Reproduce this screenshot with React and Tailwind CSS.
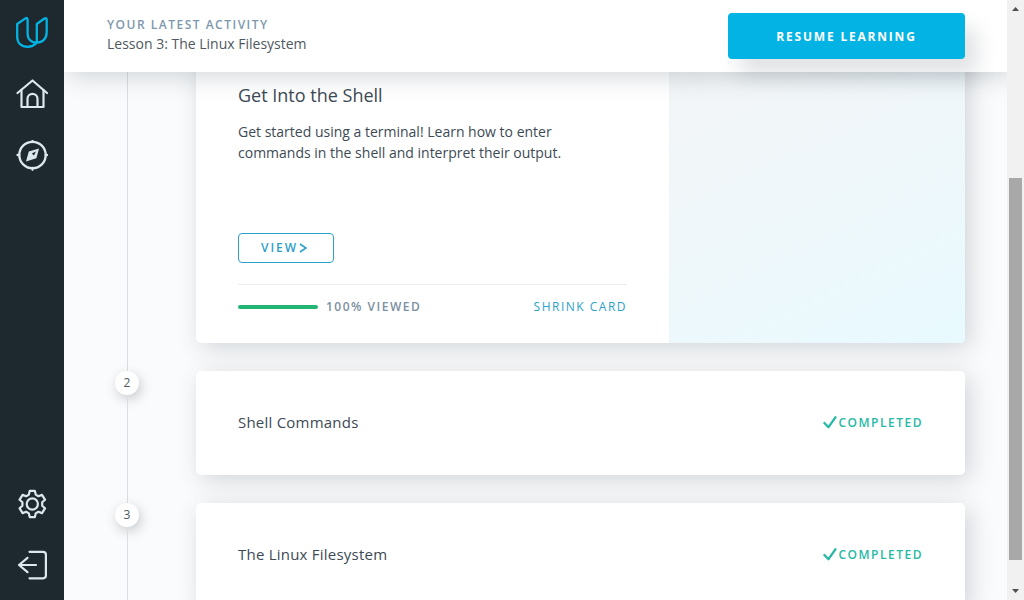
import React from "react";

function Logo() {
  return (
    <svg viewBox="0 0 32 32" className="size-8" fill="none" stroke="#02b3e4" strokeWidth="2.3" strokeLinejoin="round" strokeLinecap="round" aria-hidden="true">
      <path d="M1.2 8 9.4 2.400Q11.6 1.200 11.6 3.800V17.500C11.6 23.500 15.500 26.600 20.800 26.600C17.800 29.600 15.200 30.800 11.600 30.800C5.400 30.800 1.200 27 1.200 20.800Z" />
      <path d="M20.800 26.600V8L28.400 2.500Q30.700 1.200 30.700 3.800V16C30.700 22.600 26.600 26.600 20.800 26.600Z" />
    </svg>
  );
}

function HomeIcon() {
  return (
    <svg viewBox="0 0 32 32" className="size-8" fill="none" stroke="#dbe8ee" strokeWidth="2.2" strokeLinejoin="round" strokeLinecap="round" aria-hidden="true">
      <path d="M1.500 15 16.500 2.500 31 15" />
      <path d="M5.500 12V29H27.500V12" />
      <path d="M11.500 29V20.800A5 5 0 0 1 21.500 20.800V29" />
    </svg>
  );
}

function CompassIcon() {
  return (
    <svg viewBox="0 1 32 32" className="size-8" fill="none" stroke="#dbe8ee" strokeWidth="2.3" strokeLinecap="round" aria-hidden="true">
      <circle cx="16.500" cy="16" r="13.200" />
      <path d="M16.500 2V3M16.500 29V30.800M1.500 16H3.300M29.700 16H31" />
      <path fillRule="evenodd" fill="#dbe8ee" stroke="none" d="M23 9.400 20.400 19.200 10 22.600 12.800 12.600ZM15.800 14.500 18 16.600 19.900 12.500Z" />
    </svg>
  );
}

function GearIcon() {
  return (
    <svg viewBox="0 0 32 32" className="size-8" fill="none" stroke="#dbe8ee" strokeWidth="2.2" strokeLinejoin="round" aria-hidden="true">
      <circle cx="16.300" cy="16" r="5.600" />
      <path d="M13.700 2.900H18.900L19.700 6.600L22.400 8.200L26 6.900L29 11.700L26.200 14.200V17.800L29 20.300L26 25.100L22.400 23.800L19.700 25.400L18.900 29.100H13.700L12.900 25.400L10.200 23.800L6.600 25.100L3.600 20.300L6.400 17.800V14.200L3.600 11.700L6.600 6.900L10.200 8.200L12.900 6.600Z" />
    </svg>
  );
}

function LogoutIcon() {
  return (
    <svg viewBox="0 0 32 32" className="size-8" fill="none" stroke="#dbe8ee" strokeWidth="2.2" strokeLinejoin="round" strokeLinecap="round" aria-hidden="true">
      <path d="M13.500 2.800H27Q29.900 2.800 29.900 5.600V26.600Q29.900 29.300 27 29.300H13.500" />
      <path d="M20 16H3M11.500 8.800 3 16 11.500 23.200" />
    </svg>
  );
}

function Sidebar() {
  return (
    <nav aria-label="Main" className="flex w-16 shrink-0 flex-col items-center justify-between bg-[#1e282f] pt-4 pb-[19px]">
      <div className="flex flex-col items-center gap-[30px]">
        <a href="#" aria-label="Dashboard"><Logo /></a>
        <a href="#" aria-label="Home"><HomeIcon /></a>
        <a href="#" aria-label="Explore"><CompassIcon /></a>
      </div>
      <div className="flex flex-col items-center gap-[29px]">
        <a href="#" aria-label="Settings"><GearIcon /></a>
        <a href="#" aria-label="Log out"><LogoutIcon /></a>
      </div>
    </nav>
  );
}

function TopBar() {
  return (
    <header className="relative z-10 flex h-[72px] shrink-0 items-center justify-between bg-white pr-[42px] pl-[43px] shadow-[5px_5px_25px_0_rgba(46,61,73,0.2)]">
      <div className="pb-[5px]">
        <p className="text-xs leading-[19px] font-semibold tracking-[0.125em] text-[#7d97ad]">YOUR LATEST ACTIVITY</p>
        <p className="text-sm leading-[19px] text-[#4f5860]">Lesson 3: The Linux Filesystem</p>
      </div>
      <button type="button" className="h-[46px] w-[237px] rounded bg-[#02b3e4] pt-px text-xs font-bold tracking-[0.15em] text-white shadow-[12px_15px_20px_0_rgba(46,61,73,0.15)]">
        RESUME LEARNING
      </button>
    </header>
  );
}

function Step({ number, children }) {
  return (
    <li className="flex gap-[57px]">
      <div className="flex w-6 shrink-0 flex-col items-center">
        {number && (
          <span className="flex size-6 shrink-0 items-center justify-center rounded-full bg-white text-xs text-[#4f5860] shadow-[2px_4px_12px_0_rgba(46,61,73,0.25)]">{number}</span>
        )}
        <span className="w-px flex-1 bg-[#dbdde0]" />
      </div>
      <article className="mb-7 flex min-w-0 flex-1 rounded-[5px] bg-white shadow-[5px_5px_25px_0_rgba(46,61,73,0.2)]">{children}</article>
    </li>
  );
}

function CompletedStep({ number, title }) {
  return (
    <Step number={number}>
      <div className="flex h-[104px] flex-1 items-center justify-between px-[42px]">
        <h2 className="pb-0.5 text-[15px] leading-6 tracking-[0.015em] text-[#3d4a55]">{title}</h2>
        <p className="flex items-center gap-[2px] text-xs font-semibold tracking-[0.125em] text-[#26b9a5]">
          <svg viewBox="0 0 14 14" className="size-[14px]" fill="none" stroke="currentColor" strokeWidth="2.3" strokeLinecap="round" strokeLinejoin="round" aria-hidden="true">
            <path d="M1.400 7 5.500 11.200 12.400 1.300" />
          </svg>
          COMPLETED
        </p>
      </div>
    </Step>
  );
}

function Scrollbar() {
  return (
    <div aria-hidden="true" className="flex w-[17px] shrink-0 flex-col items-center justify-between bg-[#f1f1f1] py-[7px]">
      <svg viewBox="0 0 7 4" className="h-1 w-[7px]" fill="#505050"><path d="M0 4 3.500 0 7 4Z" /></svg>
      <div className="flex w-[13px] flex-1 flex-col py-[6px]">
        <div className="flex-[161]" />
        <div className="flex-[382] bg-[#a8a8a8]" />
        <div className="flex-[23]" />
      </div>
      <svg viewBox="0 0 7 4" className="h-1 w-[7px]" fill="#505050"><path d="M0 0 3.500 4 7 0Z" /></svg>
    </div>
  );
}

export default function App() {
  return (
    <div className="flex h-screen overflow-hidden bg-[#fafbfc] font-['Open_Sans',sans-serif]">
      <Sidebar />
      <div className="flex min-w-0 flex-1 flex-col overflow-hidden">
        <TopBar />
        <main className="min-h-0 flex-1 overflow-hidden pr-[42px] pl-[51px]">
          <ol className="-mt-8">
            <Step>
              <div className="min-w-0 flex-1 px-[42px] pt-[42px] pb-[26px]">
                <h2 className="text-lg leading-[26px] text-[#3d4a55]">Get Into the Shell</h2>
                <p className="mt-[13px] max-w-[340px] text-sm leading-[21px] text-[#3d4a55]">
                  Get started using a terminal! Learn how to enter commands in the shell and interpret their output.
                </p>
                <button type="button" className="mt-[70px] flex h-[30px] w-24 items-center justify-center gap-px rounded border border-[#2d9fcb] pr-1 text-xs font-semibold tracking-[0.165em] text-[#2d9fcb]">
                  VIEW
                  <svg viewBox="0 0 8 10" className="h-[10px] w-2" fill="none" stroke="currentColor" strokeWidth="1.600" aria-hidden="true"><path d="M1 1 7 5 1 9" /></svg>
                </button>
                <div className="mt-[21px] flex items-center justify-between border-t border-[#ebedef] pt-3 text-xs leading-5 tracking-[0.125em]">
                  <div className="flex items-center gap-2">
                    <div className="h-1 w-20 rounded-full bg-[#22b573]" />
                    <span className="font-semibold text-[#7d8fa3]">100% VIEWED</span>
                  </div>
                  <button type="button" className="text-[#2d9fcb]">SHRINK CARD</button>
                </div>
              </div>
              <div className="w-[296px] shrink-0 rounded-r-[5px] bg-linear-[155deg,#f4f5f6,#eff7fa_50%,#e8faff]" />
            </Step>
            <CompletedStep number={2} title="Shell Commands" />
            <CompletedStep number={3} title="The Linux Filesystem" />
          </ol>
        </main>
      </div>
      <Scrollbar />
    </div>
  );
}
